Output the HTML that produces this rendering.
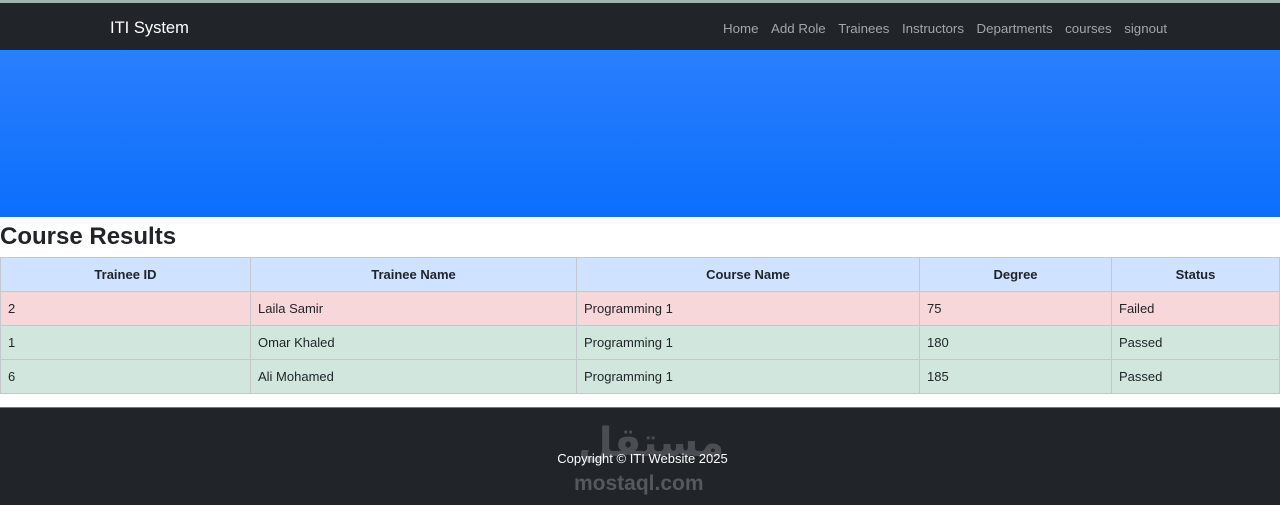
<!DOCTYPE html>
<html><head><meta charset="utf-8"><style>
*{margin:0;padding:0;box-sizing:border-box}
body{width:1280px;height:505px;overflow:hidden;font-family:"Liberation Sans",sans-serif;background:#fff;position:relative}
.top{height:3px;background:#9fb5ad}
nav{height:47px;background:#212529;position:relative}
.brand{position:absolute;left:110px;top:16px;color:#fff;font-size:16.5px}
.links{position:absolute;left:723px;top:18px;font-size:13.3px;color:#a3a6a9;white-space:nowrap}
.links span{margin-right:12.5px}
.hero{height:167px;background:linear-gradient(#2a7ffc,#0b6efd)}
h2{font-size:24px;font-weight:bold;color:#212529;height:40px;line-height:38px;padding-top:1px}
table{border-collapse:collapse;width:1280px;font-size:13px;color:#212529}
td,th{border:1px solid #c4c8cc;height:34px;padding:0 7px}
th{background:#cfe2ff;font-weight:bold;text-align:center}
tr.f td{background:#f8d7da}
tr.p td{background:#d1e7dd}
footer{position:absolute;top:407px;left:0;width:1280px;height:98px;background:#212529;border-top:1px solid #777}
.wm1{position:absolute;left:578px;top:12px;font-size:40px;color:#4a4d51;font-family:"DejaVu Sans",sans-serif;font-weight:bold}
.wm2{position:absolute;left:574px;top:64px;font-size:21px;color:#55585c;font-weight:bold}
.copy{position:absolute;left:0;width:1285px;text-align:center;top:43px;color:#fff;font-size:13px}
</style></head><body>
<div class="top"></div>
<nav><div class="brand">ITI System</div>
<div class="links"><span>Home</span><span>Add Role</span><span>Trainees</span><span>Instructors</span><span>Departments</span><span>courses</span><span>signout</span></div></nav>
<div class="hero"></div>
<h2>Course Results</h2>
<table>
<tr><th style="width:250px">Trainee ID</th><th style="width:326px">Trainee Name</th><th style="width:343px">Course Name</th><th style="width:192px">Degree</th><th>Status</th></tr>
<tr class="f"><td>2</td><td>Laila Samir</td><td>Programming 1</td><td>75</td><td>Failed</td></tr>
<tr class="p"><td>1</td><td>Omar Khaled</td><td>Programming 1</td><td>180</td><td>Passed</td></tr>
<tr class="p"><td>6</td><td>Ali Mohamed</td><td>Programming 1</td><td>185</td><td>Passed</td></tr>
</table>
<footer><div class="wm1">مستقل</div><div class="wm2">mostaql.com</div><div class="copy">Copyright © ITI Website 2025</div></footer>
</body></html>
